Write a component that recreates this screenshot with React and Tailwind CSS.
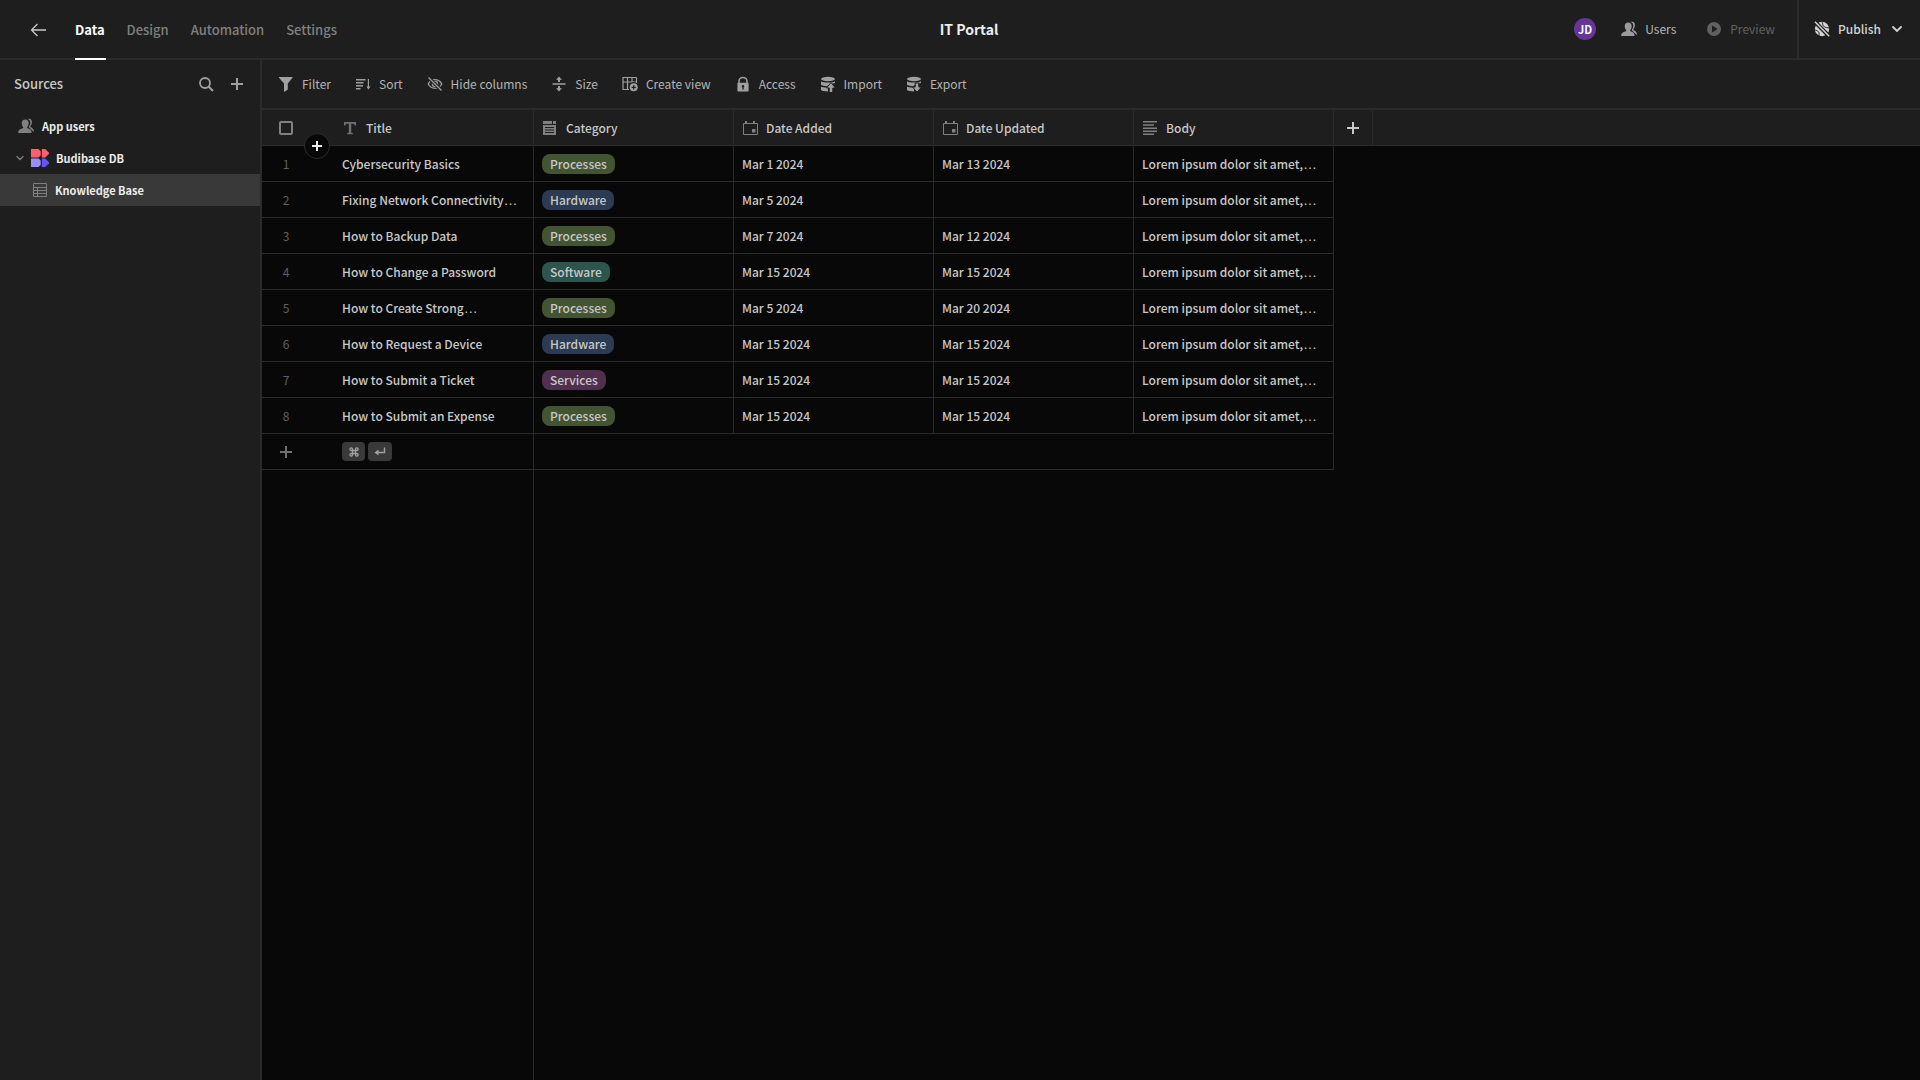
import React from "react";

function Svg({ size = 16, className = "", children }) {
  return (
    <svg width={size} height={size} viewBox={`0 0 ${size} ${size}`} fill="currentColor" className={`shrink-0 ${className}`} aria-hidden="true">
      {children}
    </svg>
  );
}

const FilterIcon = () => (
  <Svg><path d="M1.2 1h13c.4 0 .6.4.3.8L9.8 7.6v5.9l-3.2 2.3c-.3.2-.6 0-.6-.3V7.6L1 1.8C.7 1.4.8 1 1.200 1z" /></Svg>
);
const SortIcon = () => (
  <Svg>
    <path d="M1 3h9.500v1.500H1zM1 6h7.500v1.500H1zM1 9h7v1.500H1zM1 12h4.500v1.500H1zM12.800 3H14v7.500h1.500L13.400 13.500 11.300 10.500h1.500z" />
  </Svg>
);
const HideIcon = () => (
  <Svg>
    <g fill="none" stroke="currentColor" strokeWidth="1.300">
      <path d="M1.200 8C2.700 5.300 5.200 3.700 8 3.700S13.300 5.300 14.800 8C13.300 10.700 10.800 12.300 8 12.300S2.700 10.700 1.200 8z" />
      <circle cx="8" cy="8" r="2.600" />
    </g>
    <circle cx="8" cy="8" r="1.500" />
    <path d="M1.500 1.500l13 13" stroke="#1e1e1e" strokeWidth="3.200" />
    <path d="M1.500 1.500l13 13" stroke="currentColor" strokeWidth="1.300" />
  </Svg>
);
const SizeIcon = () => (
  <Svg>
    <path d="M1.500 7.200h13v1.600h-13zM8 .5l3 3.300H9V6H7V3.800H5zM8 15.500l3-3.300H9V10H7v2.200H5z" />
  </Svg>
);
const CreateViewIcon = () => (
  <Svg>
    <path d="M.5 1.500h14M.5 6h14M.5 13.500H7M1 1.500v12M5.500 1.500v12M10 1.500V6M14.500 1.500V7" fill="none" stroke="currentColor" strokeWidth="1.200" />
    <circle cx="11.700" cy="11.300" r="5" fill="#1e1e1e" />
    <circle cx="11.700" cy="11.300" r="4" />
    <path d="M11.700 9.200v4.200M9.600 11.300h4.200" stroke="#1e1e1e" strokeWidth="1.200" />
  </Svg>
);
const LockIcon = () => (
  <Svg>
    <path d="M4 7V5.500a4 4 0 0 1 8 0V7" fill="none" stroke="currentColor" strokeWidth="1.600" />
    <path fillRule="evenodd" d="M3 6.800h10c.3 0 .6.2.6.6V15c0 .3-.3.5-.6.5H3c-.3 0-.6-.2-.6-.5V7.400c0-.4.3-.6.6-.6zM8 9a1.300 1.300 0 0 0-.7 2.400V13.500h1.400v-2.100A1.300 1.300 0 0 0 8 9z" />
  </Svg>
);
function DbIcon({ down }) {
  return (
    <Svg>
      <ellipse cx="8" cy="3" rx="7" ry="2.200" />
      <path d="M1 5.200c1.500 1 4 1.400 7 1.400s5.500-.4 7-1.400V7L9.500 8.600 7 10.200C4.500 10 2 9.600 1 8.800zM1 10.500c1.200.7 3 1 5 1.100L8 12v3.400c-3 0-6-.4-7-1.400z" />
      {down ? (
        <path d="M9.200 7h3.600v4h2.700L11 16.200 6.500 11h2.700z" stroke="#1e1e1e" strokeWidth="1" />
      ) : (
        <path d="M9.200 16.500h3.600V12h2.700L11 6.500 6.500 12h2.700z" stroke="#1e1e1e" strokeWidth="1" />
      )}
    </Svg>
  );
}
const UsersIcon = ({ className }) => (
  <Svg className={className}>
    <path d="M9.600 1.100c.6-.3 1.200-.4 1.800-.3 1.700.2 2.800 1.700 2.500 3.900-.1 1.200-.6 2.300-1.300 3.100-.3.400-.2 1.200.3 1.400 1.900.8 3 2.300 3.200 4.400h-.9L11 9.600l-.1-1.200c1-1.200 1.500-2.600 1.400-4-.1-1.500-1-2.800-2.700-3.300z" />
    <path d="M7.200 1.500c2.200 0 3.500 1.500 3.500 3.700 0 1.500-.6 2.800-1.400 3.700-.3.400-.1 1.200.4 1.400 2.500.7 3.900 2 3.900 4.200 0 .3-.2.500-.5.500H.6c-.3 0-.5-.2-.5-.5C.1 12.300 2 11 4.700 10.300c.5-.1.700-1 .4-1.400-.8-.9-1.400-2.200-1.400-3.700 0-2.200 1.300-3.700 3.500-3.700z" />
  </Svg>
);
const PlayIcon = () => (
  <Svg><path fillRule="evenodd" d="M8 1a7 7 0 1 0 0 14A7 7 0 0 0 8 1zM6 4.500L11.600 8 6 11.500z" /></Svg>
);
const GlobeStrikeIcon = () => (
  <Svg>
    <circle cx="8" cy="8" r="7.200" />
    <path d="M8.800.5c-1.300 1.200.2 1.700 0 3.300 0 1.300 1.200 1.200 2 2.200.8.800 2.500.3 4.400 1.200M1.200 9c1.600.2 2.200 1 3.200 1.600 1 .6.3 2.100.9 4" fill="none" stroke="#1e1e1e" strokeWidth="1" />
    <path d="M.5.300l15 15.400" stroke="#1e1e1e" strokeWidth="4" />
    <path d="M1 .8l14.200 14.400" stroke="currentColor" strokeWidth="1.500" />
  </Svg>
);
const TextIcon = () => (
  <Svg><path d="M2 2h12v3.600h-1.400L12 3.700H9.200v9l1.600.3v1.200H5.200V13l1.600-.3v-9H4l-.6 1.900H2z" /></Svg>
);
const SelectIcon = () => (
  <Svg>
    <path fillRule="evenodd" d="M1 1h9v3H1zM11 1h3v3h-3zM1 5h13v10H1zM3 7v1h9V7zM3 9.500v1h9v-1zM3 12v1h9v-1z" />
  </Svg>
);
const CalendarIcon = () => (
  <Svg>
    <path d="M1.500 3.500h14v11h-14z" fill="none" stroke="currentColor" />
    <path d="M3 1h2v3H3zM11 1h2v3h-2zM10 9h3.500v3.500H10z" />
  </Svg>
);
const BodyIcon = () => (
  <Svg><path d="M1 1h14v1.500H1zM1 4.200h11v1.500H1zM1 7.400h14v1.500H1zM1 10.600h14v1.500H1zM1 13.500h11V15H1z" /></Svg>
);
const PlusIcon = ({ size = 12, width = 2, className }) => (
  <Svg size={size} className={className}>
    <path d={`M${size / 2} 0v${size}M0 ${size / 2}h${size}`} stroke="currentColor" strokeWidth={width} />
  </Svg>
);
const Chevron = ({ className }) => (
  <Svg size={10} className={className}><path d="M1 3l4 4 4-4" fill="none" stroke="currentColor" strokeWidth="1.800" strokeLinecap="round" /></Svg>
);
const TreeChevron = () => (
  <Svg size={8} className="text-[#808080]"><path d="M1 2.500l3 3 3-3" fill="none" stroke="currentColor" strokeWidth="1.300" strokeLinecap="round" /></Svg>
);
const TableIcon = () => (
  <Svg className="text-[#808080]">
    <path d="M1.500 1.500h13v13h-13zM1.500 5.500h13M1.500 8.500h13M1.500 11.500h13M5.500 5.500v9" fill="none" stroke="currentColor" />
  </Svg>
);
const BudibaseLogo = () => (
  <Svg size={18}>
    <path fill="#ff5f6b" d="M0 0h7.500L9.700 2.200v4.300L7.500 8.600H0zM10.800 0h3.500L18 3.700v1L14.300 8.600h-3.500z" />
    <path fill="#9b8cff" d="M0 9.400h7.500l2.200 2.200v4.300L7.500 18H0z" />
    <path fill="#6a53f5" d="M10.800 9.400h3.500L18 13.200v1L14.300 18h-3.500z" />
  </Svg>
);

const TOOLS = [
  ["Filter", <FilterIcon />],
  ["Sort", <SortIcon />],
  ["Hide columns", <HideIcon />],
  ["Size", <SizeIcon />],
  ["Create view", <CreateViewIcon />],
  ["Access", <LockIcon />],
  ["Import", <DbIcon />],
  ["Export", <DbIcon down />],
];

const COLUMNS = [
  ["Category", <SelectIcon />],
  ["Date Added", <CalendarIcon />],
  ["Date Updated", <CalendarIcon />],
  ["Body", <BodyIcon />],
];

const PILLS = {
  Processes: "bg-[#435433]",
  Hardware: "bg-[#2c3a52]",
  Software: "bg-[#2b554d]",
  Services: "bg-[#512f4e]",
};

const LOREM = "Lorem ipsum dolor sit amet,…";

const ROWS = [
  ["Cybersecurity Basics", "Processes", "Mar 1 2024", "Mar 13 2024"],
  ["Fixing Network Connectivity…", "Hardware", "Mar 5 2024", ""],
  ["How to Backup Data", "Processes", "Mar 7 2024", "Mar 12 2024"],
  ["How to Change a Password", "Software", "Mar 15 2024", "Mar 15 2024"],
  ["How to Create Strong…", "Processes", "Mar 5 2024", "Mar 20 2024"],
  ["How to Request a Device", "Hardware", "Mar 15 2024", "Mar 15 2024"],
  ["How to Submit a Ticket", "Services", "Mar 15 2024", "Mar 15 2024"],
  ["How to Submit an Expense", "Processes", "Mar 15 2024", "Mar 15 2024"],
];

// The CJK face centres its ellipsis, so the baseline one comes from Liberation Sans.
function CellText({ text }) {
  if (!text.endsWith("…")) return text;
  return (
    <span className="whitespace-nowrap">
      {text.slice(0, -1)}
      <span className="font-['Liberation_Sans',sans-serif] text-sm leading-none">…</span>
    </span>
  );
}

function Header() {
  return (
    <header className="grid h-[60px] shrink-0 grid-cols-[1fr_auto_1fr] border-b-2 border-[#2b2b2b] pl-[18px]">
      <nav className="-mb-0.5 flex items-stretch gap-[22px] pl-3 text-[13px]">
        <button aria-label="Back" className="mr-[7px] flex items-center text-[#c8c8c8]">
          <Svg><path d="M7.500 2L1.500 8l6 6M1.500 8h14.500" fill="none" stroke="currentColor" strokeWidth="1.300" /></Svg>
        </button>
        <a href="#data" className="relative flex items-center font-bold text-white">
          Data
          <span className="absolute bottom-0 left-0 h-0.5 w-[31px] bg-white" />
        </a>
        <a href="#design" className="flex items-center font-medium text-[#808080]">Design</a>
        <a href="#automation" className="flex items-center font-medium text-[#808080]">Automation</a>
        <a href="#settings" className="flex items-center font-medium text-[#808080]">Settings</a>
      </nav>
      <h1 className="self-center text-sm font-bold text-[#ececec]">IT Portal</h1>
      <div className="flex items-center justify-end">
        <span className="flex size-[22px] items-center justify-center rounded-full bg-[#66359b] text-[11px] font-bold text-white">JD</span>
        <button className="ml-[25px] flex items-center gap-2 text-[#b4b4b4]"><UsersIcon className="text-[#9b9b9b]" />Users</button>
        <button disabled className="ml-[30px] flex items-center gap-2 text-[#606060]"><PlayIcon />Preview</button>
        <button className="ml-[22px] flex h-full items-center gap-2 border-l-2 border-[#2b2b2b] pr-[18px] pl-[15px] font-medium text-[#d4d4d4]">
          <GlobeStrikeIcon />Publish<Chevron className="ml-[3px]" />
        </button>
      </div>
    </header>
  );
}

function Sidebar() {
  return (
    <aside className="flex w-[262px] shrink-0 flex-col border-r-2 border-[#2b2b2b] bg-[#1e1e1e]">
      <div className="flex h-12 items-center pr-[17px] pl-3.5">
        <h2 className="flex-1 text-[13px] font-medium text-[#c8c8c8]">Sources</h2>
        <button aria-label="Search" className="text-[#a0a0a0]">
          <Svg><circle cx="7" cy="7" r="5" fill="none" stroke="currentColor" strokeWidth="1.800" /><path d="M10.500 10.500l4.500 4.500" stroke="currentColor" strokeWidth="2" /></Svg>
        </button>
        <button aria-label="Add source" className="ml-[17px] text-[#a0a0a0]"><PlusIcon /></button>
      </div>
      <ul className="mt-0.5 text-[11px] font-bold text-[#ececec]">
        <li><a href="#users" className="flex h-8 items-center gap-2 pl-[18px]"><UsersIcon className="text-[#808080]" />App users</a></li>
        <li><a href="#db" className="flex h-8 items-center gap-[7px] pl-4"><TreeChevron /><BudibaseLogo />Budibase DB</a></li>
        <li><a href="#kb" className="flex h-8 items-center gap-[7px] bg-[#393939] pl-8"><TableIcon />Knowledge Base</a></li>
      </ul>
    </aside>
  );
}

const line = "border-[#2b2b2b]";

function Grid() {
  return (
    <table className="w-full table-fixed border-separate border-spacing-0 text-left font-medium text-[#c8c8c8]">
      <colgroup>
        <col className="w-[72px]" />
        <col className="w-[200px]" />
        <col className="w-[200px]" />
        <col className="w-[200px]" />
        <col className="w-[200px]" />
        <col className="w-[200px]" />
        <col className="w-[39px]" />
        <col />
      </colgroup>
      <thead>
        <tr className="h-9 bg-[#1e1e1e]">
          <th className={`relative border-b p-0 pl-[17px] ${line}`}>
            <input type="checkbox" aria-label="Select all rows" className="block size-3.5 appearance-none rounded-xs border-2 border-[#808080]" />
            <button aria-label="Insert row" className="absolute right-1 -bottom-3.5 flex size-[26px] items-center justify-center rounded-full border border-[#2b2b2b] bg-[#080808] text-[#ececec]">
              <PlusIcon size={10} />
            </button>
          </th>
          <th className={`border-r border-b p-0 pl-2 ${line}`}>
            <span className="flex items-center gap-2 font-medium"><span className="text-[#707070]"><TextIcon /></span>Title</span>
          </th>
          {COLUMNS.map(([name, icon]) => (
            <th key={name} className={`border-r border-b p-0 pl-2 ${line}`}>
              <span className="flex items-center gap-2 font-medium"><span className="text-[#808080]">{icon}</span>{name}</span>
            </th>
          ))}
          <th className={`border-r border-b p-0 ${line}`}>
            <button aria-label="Add column" className="mx-auto block"><PlusIcon /></button>
          </th>
          <th className={`border-b p-0 ${line}`} />
        </tr>
      </thead>
      <tbody>
        {ROWS.map(([title, category, added, updated], i) => (
          <tr key={title} className="h-9">
            <td className={`border-b p-0 pr-6 text-center font-normal text-[#606060] ${line}`}>{i + 1}</td>
            <td className={`border-r border-b px-2 py-0 ${line}`}><CellText text={title} /></td>
            <td className={`border-r border-b px-2 py-0 ${line}`}>
              <span className={`flex h-5 w-fit items-center rounded-lg px-2 ${PILLS[category]}`}>{category}</span>
            </td>
            <td className={`border-r border-b px-2 py-0 ${line}`}>{added}</td>
            <td className={`border-r border-b px-2 py-0 ${line}`}>{updated}</td>
            <td className={`border-r border-b px-2 py-0 ${line}`}><CellText text={LOREM} /></td>
          </tr>
        ))}
        <tr className="h-9">
          <td className={`border-b p-0 pr-6 ${line}`}>
            <button aria-label="Add row" className="mx-auto block text-[#707070]"><PlusIcon /></button>
          </td>
          <td className={`border-r border-b px-2 py-0 ${line}`}>
            <span className="flex gap-[3px] text-[#a0a0a0]">
              <kbd className="flex h-[19px] w-[23px] items-center justify-center rounded bg-[#393939]">
                <Svg size={10}><path d="M3.500 3.500h3v3h-3zM3.500 3.500H2.200A1.300 1.300 0 1 1 3.500 2.200zM6.500 3.500h1.300A1.300 1.300 0 1 0 6.500 2.200zM3.500 6.500H2.200a1.300 1.300 0 1 0 1.300 1.300zM6.500 6.500h1.300a1.300 1.300 0 1 1-1.300 1.300z" fill="none" stroke="currentColor" strokeWidth="1.300" /></Svg>
              </kbd>
              <kbd className="flex h-[19px] w-6 items-center justify-center rounded bg-[#393939]">
                <Svg size={12}><path d="M10.500 1.500v5H3" fill="none" stroke="currentColor" strokeWidth="1.400" /><path d="M.5 6.500l4-3v6z" /></Svg>
              </kbd>
            </span>
          </td>
          <td colSpan={4} className={`border-r border-b p-0 ${line}`} />
        </tr>
      </tbody>
    </table>
  );
}

export default function App() {
  return (
    <div className="flex min-h-screen flex-col bg-[#1e1e1e] font-['Noto_Sans_CJK_KR',sans-serif] text-[12px] leading-[18px]">
      <Header />
      <div className="flex flex-1">
        <Sidebar />
        <main className="flex min-w-0 flex-1 flex-col bg-[#080808]">
          <div className="flex h-[50px] shrink-0 items-center gap-6 border-b-2 border-[#2b2b2b] bg-[#1e1e1e] pl-4 text-[#b4b4b4]">
            {TOOLS.map(([label, icon]) => (
              <button key={label} className="flex items-center gap-2 whitespace-nowrap"><span className="text-[#a0a0a0]">{icon}</span>{label}</button>
            ))}
          </div>
          <Grid />
          <div className="w-[272px] flex-1 border-r border-[#2b2b2b]" />
        </main>
      </div>
    </div>
  );
}
